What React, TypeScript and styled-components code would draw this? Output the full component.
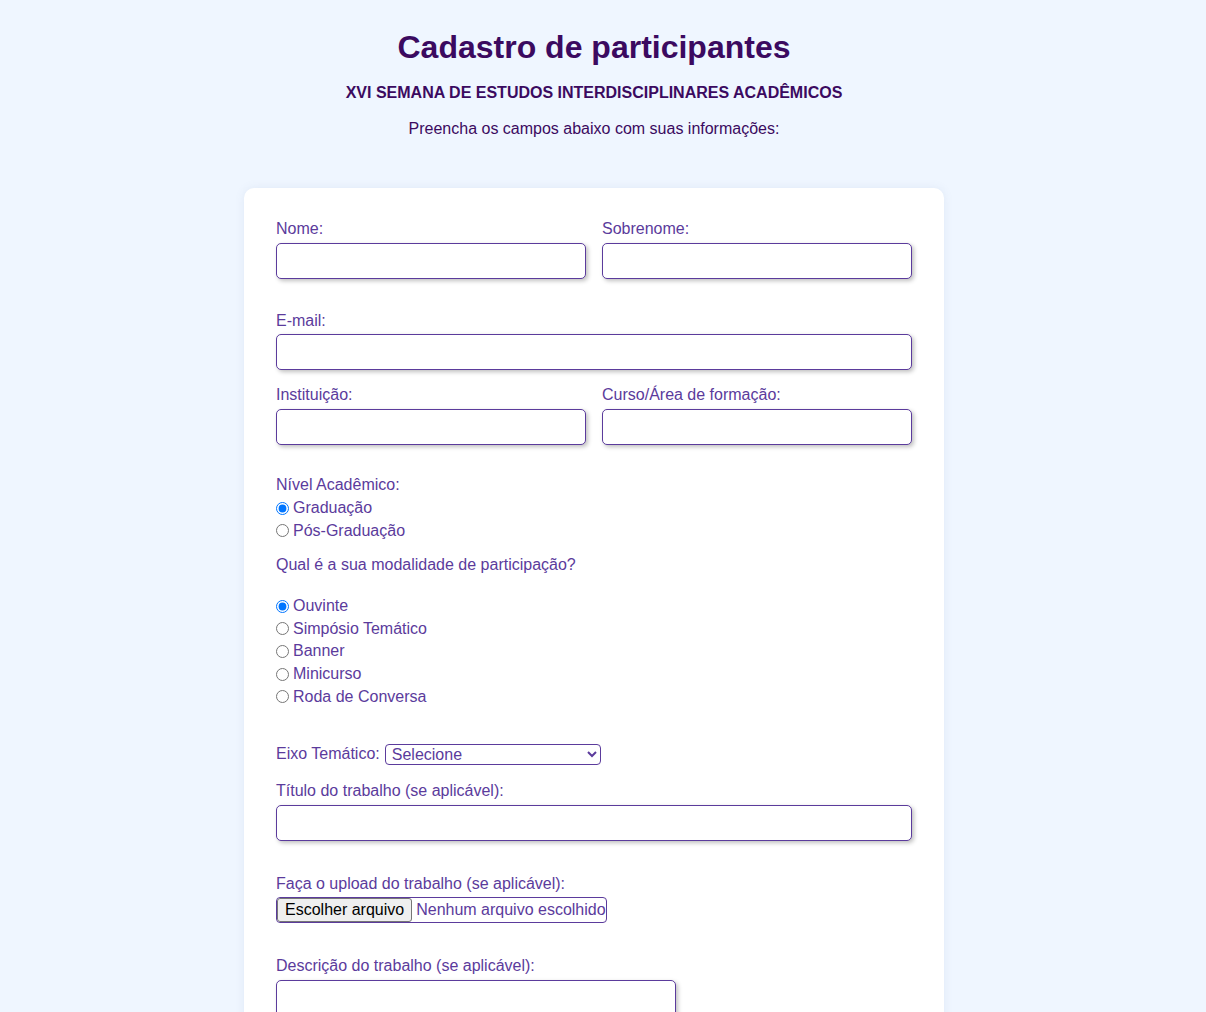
import styled, { createGlobalStyle } from 'styled-components'

const GlobalStyle = createGlobalStyle`
  html, body {
    margin: 0;
    padding: 0;
    background-color: #eff6ff;
  }
  body {
    font-family: 'Liberation Sans', Arial, sans-serif;
  }
`

const Page = styled.div`
  display: flex;
  flex-direction: column;
  align-items: center;
  padding: 29px 18px 40px 0;
`

const Title = styled.h1`
  margin: 0;
  font-size: 32px;
  line-height: 37px;
  font-weight: 700;
  color: #3b0a60;
`

const Subtitle = styled.h2`
  margin: 17px 0 0;
  font-size: 16px;
  line-height: 19px;
  font-weight: 700;
  color: #3b0a60;
  text-transform: uppercase;
`

const Intro = styled.p`
  margin: 17px 0 0;
  font-size: 16px;
  line-height: 19px;
  color: #3b0a60;
`

const Card = styled.form`
  width: 700px;
  box-sizing: border-box;
  margin-top: 50px;
  padding: 30px 32px 40px;
  background-color: #ffffff;
  border-radius: 10px;
  box-shadow: 0 0 10px rgba(120, 140, 180, 0.12);
  color: #5b3b9c;
  font-size: 16px;
  line-height: 22.7px;
`

const Row = styled.div<{ $mb?: number }>`
  display: grid;
  grid-template-columns: 1fr 1fr;
  gap: 16px;
  margin-bottom: ${(p) => p.$mb ?? 0}px;
`

const Field = styled.div<{ $mb?: number }>`
  display: flex;
  flex-direction: column;
  margin-bottom: ${(p) => p.$mb ?? 0}px;
`

const Label = styled.label`
  display: block;
  margin-bottom: 2px;
`

const TextInput = styled.input`
  box-sizing: border-box;
  width: 100%;
  height: 36px;
  border: 1px solid #5b3b9c;
  border-radius: 5px;
  box-shadow: 2px 2px 4px rgba(0, 0, 0, 0.25);
  font: inherit;
  padding: 0 8px;
  outline: none;
`

const Group = styled.div<{ $mb?: number }>`
  display: flex;
  flex-direction: column;
  margin-bottom: ${(p) => p.$mb ?? 0}px;
`

const Question = styled.div<{ $mb?: number }>`
  margin-bottom: ${(p) => p.$mb ?? 0}px;
`

const Option = styled.label`
  display: flex;
  align-items: center;
  gap: 4px;
  height: 22.7px;

  input {
    margin: 0;
    width: 13px;
    height: 13px;
  }
`

const Inline = styled.div<{ $mb?: number }>`
  display: flex;
  align-items: center;
  gap: 5px;
  margin-bottom: ${(p) => p.$mb ?? 0}px;
`

const Select = styled.select`
  box-sizing: border-box;
  width: 216px;
  height: 21px;
  border: 1px solid #5b3b9c;
  border-radius: 4px;
  background-color: #ffffff;
  color: #5b3b9c;
  font: inherit;
  font-size: 16px;
  line-height: 18px;
  padding: 0 2px;
`

const FileBox = styled.label`
  display: flex;
  align-items: center;
  box-sizing: border-box;
  width: 331px;
  height: 26px;
  border: 1px solid #5b3b9c;
  border-radius: 4px;
  overflow: hidden;
  white-space: nowrap;
`

const FileButton = styled.span`
  box-sizing: border-box;
  height: 24px;
  display: flex;
  align-items: center;
  padding: 0 7px;
  margin-right: 4px;
  background-color: #efefef;
  border: 1px solid #767676;
  border-radius: 3px;
  color: #000000;
`

const HiddenFile = styled.input`
  display: none;
`

const TextArea = styled.textarea`
  box-sizing: border-box;
  width: 400px;
  height: 80px;
  border: 1px solid #5b3b9c;
  border-radius: 5px;
  box-shadow: 2px 2px 4px rgba(0, 0, 0, 0.25);
  font: inherit;
  resize: none;
`

const niveis = ['Graduação', 'Pós-Graduação']
const modalidades = ['Ouvinte', 'Simpósio Temático', 'Banner', 'Minicurso', 'Roda de Conversa']

const App = () => {
  return (
    <Page>
      <GlobalStyle />
      <Title>Cadastro de participantes</Title>
      <Subtitle>XVI Semana de Estudos Interdisciplinares Acadêmicos</Subtitle>
      <Intro>Preencha os campos abaixo com suas informações:</Intro>

      <Card onSubmit={(e) => e.preventDefault()}>
        <Row $mb={31}>
          <Field>
            <Label htmlFor="nome">Nome:</Label>
            <TextInput id="nome" type="text" />
          </Field>
          <Field>
            <Label htmlFor="sobrenome">Sobrenome:</Label>
            <TextInput id="sobrenome" type="text" />
          </Field>
        </Row>

        <Field $mb={14}>
          <Label htmlFor="email">E-mail:</Label>
          <TextInput id="email" type="email" />
        </Field>

        <Row $mb={29}>
          <Field>
            <Label htmlFor="instituicao">Instituição:</Label>
            <TextInput id="instituicao" type="text" />
          </Field>
          <Field>
            <Label htmlFor="curso">Curso/Área de formação:</Label>
            <TextInput id="curso" type="text" />
          </Field>
        </Row>

        <Group $mb={12}>
          <span>Nível Acadêmico:</span>
          {niveis.map((n, i) => (
            <Option key={n}>
              <input type="radio" name="nivel" defaultChecked={i === 0} />
              {n}
            </Option>
          ))}
        </Group>

        <Question $mb={18}>Qual é a sua modalidade de participação?</Question>

        <Group $mb={35}>
          {modalidades.map((m, i) => (
            <Option key={m}>
              <input type="radio" name="modalidade" defaultChecked={i === 0} />
              {m}
            </Option>
          ))}
        </Group>

        <Inline $mb={14}>
          <span>Eixo Temático:</span>
          <Select defaultValue="">
            <option value="">Selecione</option>
          </Select>
        </Inline>

        <Field $mb={32}>
          <Label htmlFor="titulo">Título do trabalho (se aplicável):</Label>
          <TextInput id="titulo" type="text" />
        </Field>

        <Field $mb={32}>
          <Label htmlFor="arquivo">Faça o upload do trabalho (se aplicável):</Label>
          <FileBox htmlFor="arquivo">
            <FileButton>Escolher arquivo</FileButton>
            Nenhum arquivo escolhido
          </FileBox>
          <HiddenFile id="arquivo" type="file" />
        </Field>

        <Field>
          <Label htmlFor="descricao">Descrição do trabalho (se aplicável):</Label>
          <TextArea id="descricao" />
        </Field>
      </Card>
    </Page>
  )
}

export default App
